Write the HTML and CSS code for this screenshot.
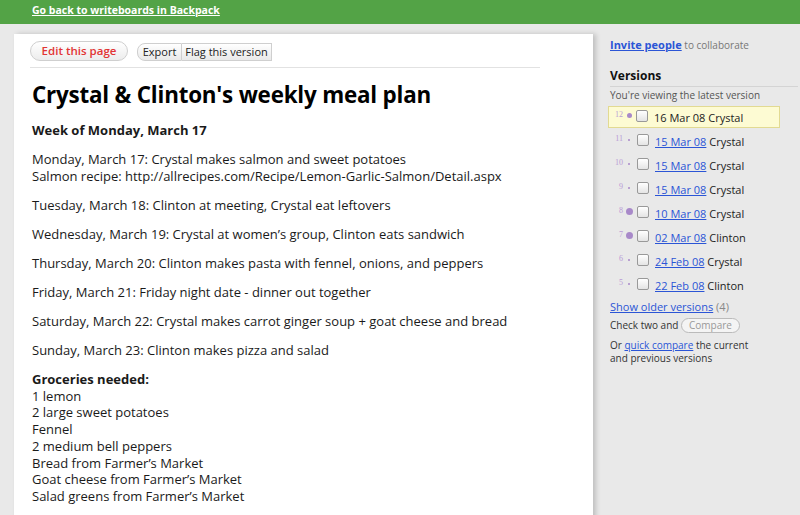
FILE: index.html
```html
<!DOCTYPE html>
<html>
<head lang="en">
    <meta charset="UTF-8">
    <title>Crystal &amp; Clinton's weekly meal plan</title>
    <link rel="stylesheet" href="styles.css">
</head>
<body>
<div class="topbar">
    <a href="javascript:;">Go back to writeboards in Backpack</a>
</div>
<div class="wrap">
    <div class="page">
        <div class="tools">
            <a class="edit" href="javascript:;">Edit this page</a>
            <div class="group">
                <a class="first" href="javascript:;">Export</a>
                <a href="javascript:;">Flag this version</a>
            </div>
        </div>
        <h1>Crystal &amp; Clinton's weekly meal plan</h1>
        <p><b>Week of Monday, March 17</b></p>
        <p>Monday, March 17: Crystal makes salmon and sweet potatoes<br>
            Salmon recipe: http://allrecipes.com/Recipe/Lemon-Garlic-Salmon/Detail.aspx</p>
        <p>Tuesday, March 18: Clinton at meeting, Crystal eat leftovers</p>
        <p>Wednesday, March 19: Crystal at women’s group, Clinton eats sandwich</p>
        <p>Thursday, March 20: Clinton makes pasta with fennel, onions, and peppers</p>
        <p>Friday, March 21: Friday night date - dinner out together</p>
        <p>Saturday, March 22: Crystal makes carrot ginger soup + goat cheese and bread</p>
        <p>Sunday, March 23: Clinton makes pizza and salad</p>
        <p class="list"><b>Groceries needed:</b><br>
            1 lemon<br>
            2 large sweet potatoes<br>
            Fennel<br>
            2 medium bell peppers<br>
            Bread from Farmer’s Market<br>
            Goat cheese from Farmer’s Market<br>
            Salad greens from Farmer’s Market</p>
    </div>
    <div class="side">
        <div class="invite"><a href="javascript:;">Invite people</a> to collaborate</div>
        <h2>Versions</h2>
        <div class="note">You're viewing the latest version</div>
        <ul class="versions">
            <li class="current"><span class="num">12</span><span class="dot mid"></span><span class="box"></span><span class="date">16 Mar 08</span> Crystal</li>
            <li><span class="num">11</span><span class="dot"></span><span class="box"></span><a href="javascript:;">15 Mar 08</a> Crystal</li>
            <li><span class="num">10</span><span class="dot"></span><span class="box"></span><a href="javascript:;">15 Mar 08</a> Crystal</li>
            <li><span class="num">9</span><span class="dot"></span><span class="box"></span><a href="javascript:;">15 Mar 08</a> Crystal</li>
            <li><span class="num">8</span><span class="dot big"></span><span class="box"></span><a href="javascript:;">10 Mar 08</a> Crystal</li>
            <li><span class="num">7</span><span class="dot big"></span><span class="box"></span><a href="javascript:;">02 Mar 08</a> Clinton</li>
            <li><span class="num">6</span><span class="dot"></span><span class="box"></span><a href="javascript:;">24 Feb 08</a> Crystal</li>
            <li><span class="num">5</span><span class="dot"></span><span class="box"></span><a href="javascript:;">22 Feb 08</a> Clinton</li>
        </ul>
        <div class="older"><a href="javascript:;">Show older versions</a> <span>(4)</span></div>
        <div class="compare">Check two and <span class="btn">Compare</span></div>
        <div class="quick">Or <a href="javascript:;">quick compare</a> the current<br>and previous versions</div>
    </div>
</div>
</body>
</html>
```

FILE: styles.css
```css
* {
    margin: 0;
    padding: 0;
}

body {
    background: #e9e9e9;
    font-family: "Open Sans", "DejaVu Sans", sans-serif;
    font-size: 13px;
    color: #1a1a1a;
    overflow: hidden;
}

.topbar {
    background: #53a346;
    height: 24px;
    padding-left: 32px;
    box-sizing: border-box;
}

.topbar a {
    color: #fff;
    font-size: 10.5px;
    font-weight: bold;
    line-height: 18px;
}

.wrap {
    display: flex;
    align-items: flex-start;
}

.page {
    background: #fff;
    width: 510px;
    height: 500px;
    margin: 10px 0 0 14px;
    padding: 7px 53px 0 16px;
    box-shadow: 3px 0 5px rgba(0, 0, 0, 0.18);
}

.tools {
    display: flex;
    align-items: center;
    gap: 9px;
    padding-bottom: 6px;
    border-bottom: 1px solid #e2e2e2;
}

.edit {
    display: block;
    width: 96px;
    height: 18px;
    line-height: 18px;
    text-align: center;
    color: #e23434;
    font-weight: 600;
    font-size: 11.5px;
    text-decoration: none;
    border: 1px solid #cfcfcf;
    border-radius: 10px;
    background: linear-gradient(#fff, #ececec);
}

.group {
    display: flex;
    margin-top: 2px;
}

.group a {
    display: block;
    box-sizing: border-box;
    height: 18px;
    line-height: 16px;
    text-align: center;
    white-space: nowrap;
    font-size: 11px;
    color: #222;
    text-decoration: none;
    border: 1px solid #cfcfcf;
    background: linear-gradient(#fff, #e9e9e9);
}

.group a.first {
    width: 45px;
    border-radius: 8px 0 0 8px;
}

.group a + a {
    border-left: none;
    width: 90px;
}

h1 {
    font-size: 22.4px;
    margin: 11px 0 12px 2px;
    color: #000;
    letter-spacing: -0.2px;
}

p {
    margin: 0 0 12px 2px;
    line-height: 17px;
}

p.list {
    line-height: 16.7px;
}

.side {
    width: 188px;
    padding: 13px 0 0 17px;
    font-size: 10px;
    color: #555;
}

.side a {
    color: #2b55d6;
}

.invite {
    color: #777;
}

.invite a {
    font-weight: bold;
    font-size: 11px;
}

h2 {
    font-size: 12px;
    color: #111;
    margin-top: 15px;
    padding: 0 0 2px 0;
    border-bottom: 1px solid #d4d4d4;
}

.note {
    margin-top: 1px;
}

.versions {
    list-style: none;
    margin-top: 4px;
    margin-left: -2px;
}

.versions li {
    display: flex;
    align-items: center;
    height: 24px;
    font-size: 11px;
    color: #222;
    border: 1px solid transparent;
    width: 172px;
    box-sizing: border-box;
    white-space: pre;
}

.versions li.current {
    height: 22px;
    margin-bottom: 1px;
    background: #fdfbd3;
    border-color: #e2da92;
}

.num {
    width: 14px;
    text-align: right;
    font-family: "Liberation Serif", serif;
    font-size: 8px;
    color: #b99bd6;
    margin-top: -5px;
}

.dot {
    width: 12px;
    display: flex;
    justify-content: center;
    margin-top: -3px;
}

.dot::after {
    content: "";
    width: 2px;
    height: 2px;
    border-radius: 50%;
    background: #a889c9;
}

.dot.mid::after {
    width: 5px;
    height: 5px;
}

.dot.big::after {
    width: 7px;
    height: 7px;
}

.box {
    width: 10px;
    height: 10px;
    margin: -3px 6px 0 2px;
    border: 1px solid #999;
    border-radius: 2px;
    background: linear-gradient(#fff, #e4e4e4);
}

.versions li.current .box {
    margin-left: 1px;
}

.date {
    color: #222;
}

.older {
    margin-top: 2px;
    font-size: 11px;
}

.older span {
    color: #888;
}

.compare {
    margin-top: 4px;
    color: #333;
}

.btn {
    display: inline-block;
    padding: 0 7px;
    line-height: 13px;
    border: 1px solid #bbb;
    border-radius: 8px;
    color: #999;
    background: #f4f4f4;
}

.quick {
    margin-top: 6px;
    line-height: 12.5px;
    color: #333;
}
```
